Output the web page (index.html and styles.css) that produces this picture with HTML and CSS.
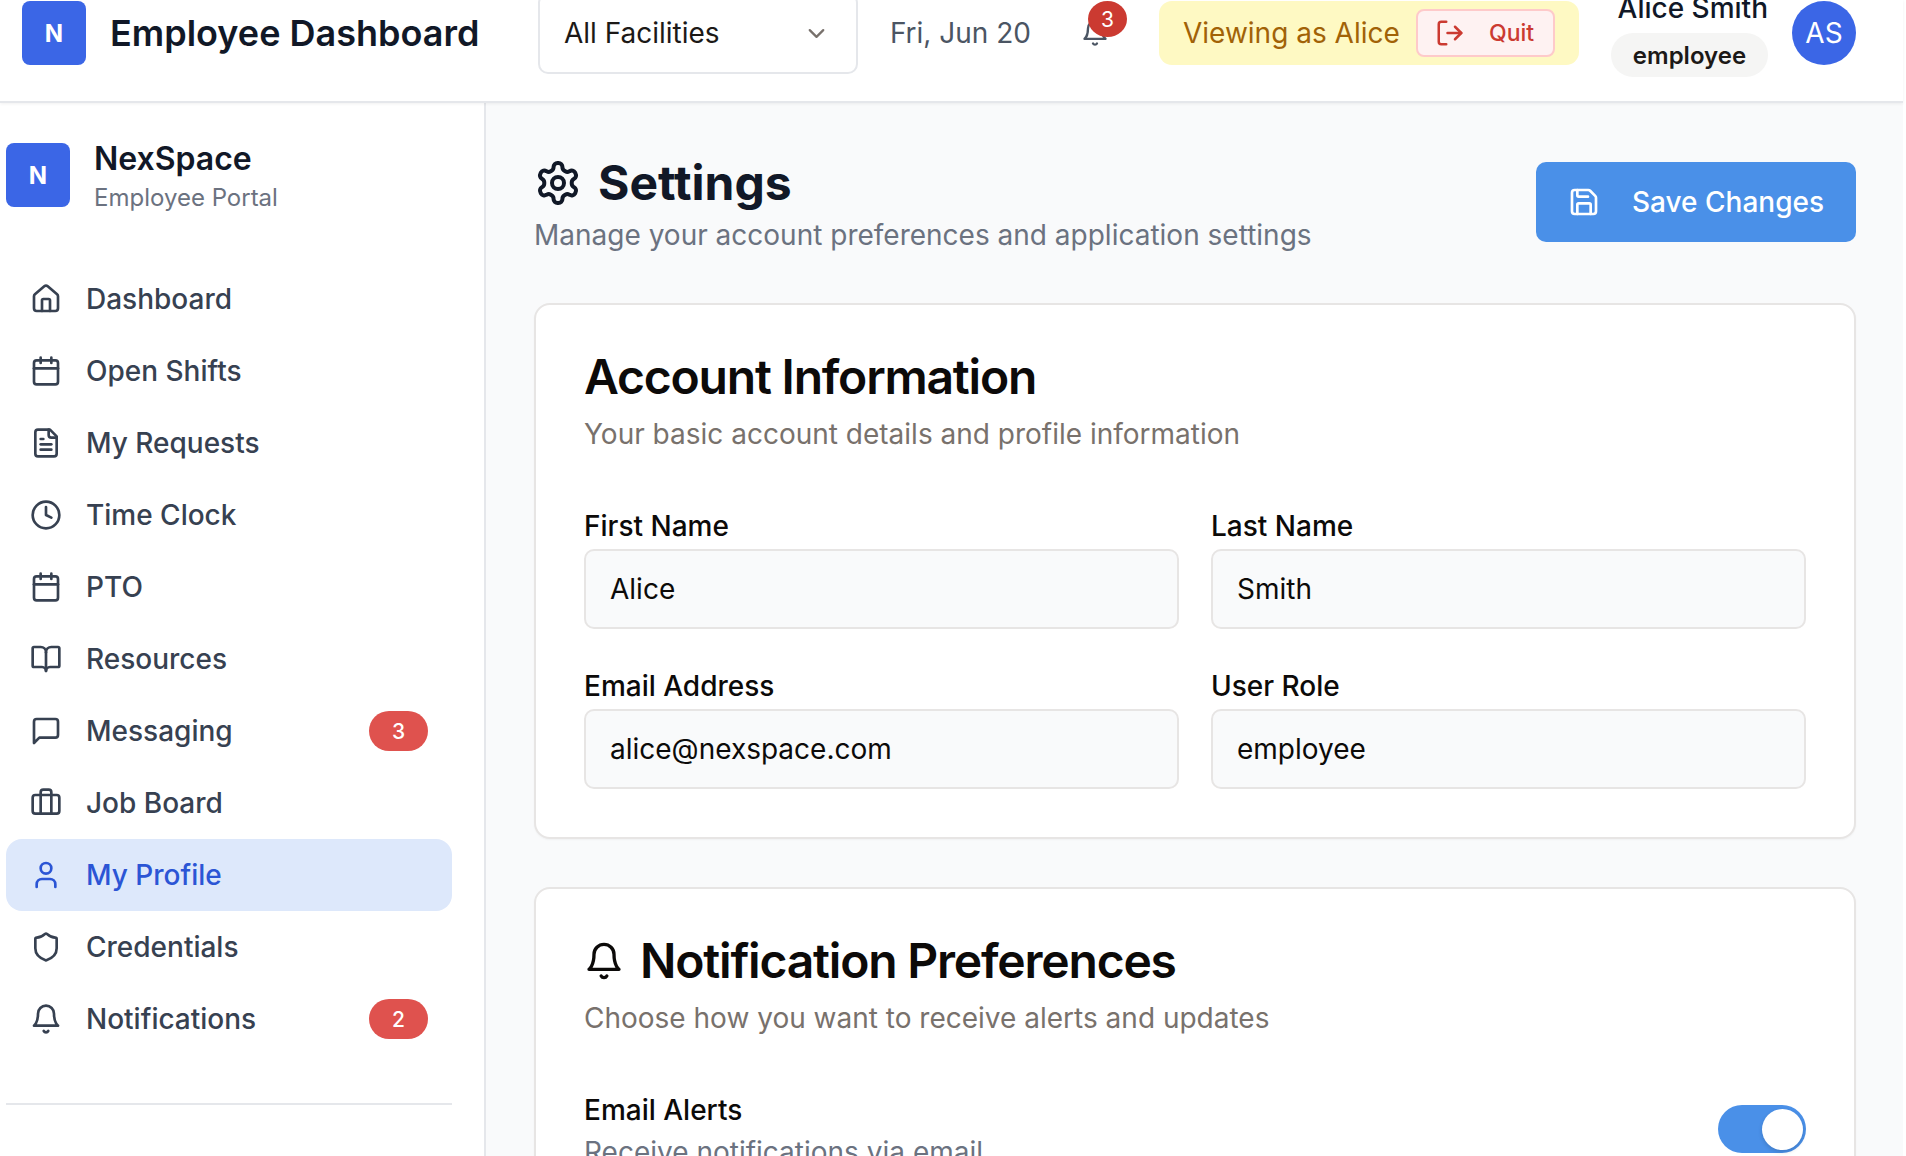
FILE: index.html
```html
<!DOCTYPE html>
<html lang="en">
<head>
    <meta charset="UTF-8">
    <title>Employee Dashboard</title>
    <link rel="stylesheet" href="styles.css">
</head>
<body>
<div class="page">
    <header class="topbar">
        <div class="brand">
            <div class="logo">N</div>
            <div class="brand-title">Employee Dashboard</div>
        </div>
        <div class="facility">
            <span>All Facilities</span>
            <svg class="chev" viewBox="0 0 24 24"><path d="m6 9 6 6 6-6"/></svg>
        </div>
        <div class="date">Fri, Jun 20</div>
        <div class="bell">
            <svg class="bell-icon" viewBox="0 0 24 24"><path d="M6 8a6 6 0 0 1 12 0c0 7 3 9 3 9H3s3-2 3-9"/><path d="M10.3 21a1.94 1.94 0 0 0 3.4 0"/></svg>
            <span class="bell-count">3</span>
        </div>
        <div class="viewing">
            <span>Viewing as Alice</span>
            <div class="quit">
                <svg viewBox="0 0 24 24"><path d="M9 3H5a2 2 0 0 0-2 2v14a2 2 0 0 0 2 2h4"/><path d="M10 12h11"/><path d="m16 7 5 5-5 5"/></svg>
                <span>Quit</span>
            </div>
        </div>
        <div class="user">
            <div class="user-name">Alice Smith</div>
            <div class="user-role">employee</div>
        </div>
        <div class="avatar">AS</div>
    </header>

    <div class="body-row">
        <aside class="sidebar">
            <div class="side-brand">
                <div class="logo">N</div>
                <div class="side-text">
                    <div class="side-name">NexSpace</div>
                    <div class="side-sub">Employee Portal</div>
                </div>
            </div>
            <nav class="nav">
                <a class="nav-item"><svg viewBox="0 0 24 24"><path d="M15 21v-8a1 1 0 0 0-1-1h-4a1 1 0 0 0-1 1v8"/><path d="M3 10a2 2 0 0 1 .7-1.5l7-6a2 2 0 0 1 2.6 0l7 6a2 2 0 0 1 .7 1.5v9a2 2 0 0 1-2 2H5a2 2 0 0 1-2-2z"/></svg>Dashboard</a>
                <a class="nav-item"><svg viewBox="0 0 24 24"><path d="M8 2v4"/><path d="M16 2v4"/><rect x="3" y="4" width="18" height="18" rx="2"/><path d="M3 10h18"/></svg>Open Shifts</a>
                <a class="nav-item"><svg viewBox="0 0 24 24"><path d="M15 2H6a2 2 0 0 0-2 2v16a2 2 0 0 0 2 2h12a2 2 0 0 0 2-2V7z"/><path d="M14 2v4a2 2 0 0 0 2 2h4"/><path d="M10 9H8"/><path d="M16 13H8"/><path d="M16 17H8"/></svg>My Requests</a>
                <a class="nav-item"><svg viewBox="0 0 24 24"><circle cx="12" cy="12" r="10"/><path d="M12 6v6l4 2"/></svg>Time Clock</a>
                <a class="nav-item"><svg viewBox="0 0 24 24"><path d="M8 2v4"/><path d="M16 2v4"/><rect x="3" y="4" width="18" height="18" rx="2"/><path d="M3 10h18"/></svg>PTO</a>
                <a class="nav-item"><svg viewBox="0 0 24 24"><path d="M12 7v14"/><path d="M3 18a1 1 0 0 1-1-1V4a1 1 0 0 1 1-1h5a4 4 0 0 1 4 4 4 4 0 0 1 4-4h5a1 1 0 0 1 1 1v13a1 1 0 0 1-1 1h-6a3 3 0 0 0-3 3 3 3 0 0 0-3-3z"/></svg>Resources</a>
                <a class="nav-item"><svg viewBox="0 0 24 24"><path d="M21 15a2 2 0 0 1-2 2H7l-4 4V5a2 2 0 0 1 2-2h14a2 2 0 0 1 2 2z"/></svg>Messaging<span class="nav-badge">3</span></a>
                <a class="nav-item"><svg viewBox="0 0 24 24"><path d="M16 20V4a2 2 0 0 0-2-2h-4a2 2 0 0 0-2 2v16"/><rect x="2" y="6" width="20" height="14" rx="2"/></svg>Job Board</a>
                <a class="nav-item active"><svg viewBox="0 0 24 24"><path d="M19 21v-2a4 4 0 0 0-4-4H9a4 4 0 0 0-4 4v2"/><circle cx="12" cy="7" r="4"/></svg>My Profile</a>
                <a class="nav-item"><svg viewBox="0 0 24 24"><path d="M20 13c0 5-3.5 7.5-7.66 8.95a1 1 0 0 1-.67-.01C7.5 20.5 4 18 4 13V6a1 1 0 0 1 1-1c2 0 4.500-1.200 6.240-2.720a1.170 1.170 0 0 1 1.520 0C14.510 3.810 17 5 19 5a1 1 0 0 1 1 1z"/></svg>Credentials</a>
                <a class="nav-item"><svg viewBox="0 0 24 24"><path d="M6 8a6 6 0 0 1 12 0c0 7 3 9 3 9H3s3-2 3-9"/><path d="M10.3 21a1.94 1.94 0 0 0 3.4 0"/></svg>Notifications<span class="nav-badge">2</span></a>
            </nav>
            <div class="side-rule"></div>
        </aside>

        <main class="main">
            <div class="page-head">
                <div>
                    <h1 class="page-title">
                        <svg viewBox="0 0 24 24"><path d="M12.220 2h-.44a2 2 0 0 0-2 2v.18a2 2 0 0 1-1 1.730l-.43.25a2 2 0 0 1-2 0l-.15-.08a2 2 0 0 0-2.730.73l-.22.38a2 2 0 0 0 .73 2.730l.15.1a2 2 0 0 1 1 1.720v.51a2 2 0 0 1-1 1.740l-.15.09a2 2 0 0 0-.73 2.730l.22.38a2 2 0 0 0 2.730.73l.15-.08a2 2 0 0 1 2 0l.43.25a2 2 0 0 1 1 1.730V20a2 2 0 0 0 2 2h.44a2 2 0 0 0 2-2v-.18a2 2 0 0 1 1-1.730l.43-.25a2 2 0 0 1 2 0l.15.08a2 2 0 0 0 2.730-.73l.22-.39a2 2 0 0 0-.73-2.730l-.15-.08a2 2 0 0 1-1-1.740v-.5a2 2 0 0 1 1-1.740l.15-.09a2 2 0 0 0 .73-2.730l-.22-.38a2 2 0 0 0-2.730-.73l-.15.08a2 2 0 0 1-2 0l-.43-.25a2 2 0 0 1-1-1.730V4a2 2 0 0 0-2-2z"/><circle cx="12" cy="12" r="3"/></svg>
                        Settings
                    </h1>
                    <p class="page-sub">Manage your account preferences and application settings</p>
                </div>
                <button class="save">
                    <svg viewBox="0 0 24 24"><path d="M15.200 3a2 2 0 0 1 1.400.6l3.800 3.800a2 2 0 0 1 .6 1.400V19a2 2 0 0 1-2 2H5a2 2 0 0 1-2-2V5a2 2 0 0 1 2-2z"/><path d="M17 21v-7a1 1 0 0 0-1-1H8a1 1 0 0 0-1 1v7"/><path d="M7 3v4a1 1 0 0 0 1 1h7"/></svg>
                    Save Changes
                </button>
            </div>

            <section class="card">
                <h2 class="card-title">Account Information</h2>
                <p class="card-sub">Your basic account details and profile information</p>
                <div class="fields">
                    <div class="field">
                        <label>First Name</label>
                        <div class="input">Alice</div>
                    </div>
                    <div class="field">
                        <label>Last Name</label>
                        <div class="input">Smith</div>
                    </div>
                    <div class="field">
                        <label>Email Address</label>
                        <div class="input">alice@nexspace.com</div>
                    </div>
                    <div class="field">
                        <label>User Role</label>
                        <div class="input">employee</div>
                    </div>
                </div>
            </section>

            <section class="card">
                <h2 class="card-title">
                    <svg viewBox="0 0 24 24"><path d="M6 8a6 6 0 0 1 12 0c0 7 3 9 3 9H3s3-2 3-9"/><path d="M10.3 21a1.94 1.94 0 0 0 3.4 0"/></svg>
                    Notification Preferences
                </h2>
                <p class="card-sub">Choose how you want to receive alerts and updates</p>
                <div class="pref">
                    <div>
                        <div class="pref-name">Email Alerts</div>
                        <div class="pref-sub">Receive notifications via email</div>
                    </div>
                    <div class="toggle"><span class="thumb"></span></div>
                </div>
            </section>
        </main>
    </div>
</div>
</body>
</html>
```

FILE: styles.css
```css
* {
    box-sizing: border-box;
}
html, body {
    margin: 0;
    height: 100%;
    overflow: hidden;
    background: #fff;
}
body {
    font-family: Inter, "Liberation Sans", sans-serif;
    color: #111827;
}
svg {
    fill: none;
    stroke: currentColor;
    stroke-width: 2;
    stroke-linecap: round;
    stroke-linejoin: round;
    flex-shrink: 0;
}
.page {
    width: 1903px;
    height: 1156px;
    display: flex;
    flex-direction: column;
}

/* top bar */
.topbar {
    height: 103px;
    flex-shrink: 0;
    display: flex;
    align-items: center;
    gap: 32px;
    padding: 0 47px 35px 22px;
    background: #fff;
    border-bottom: 2px solid #e5e7eb;
    box-shadow: 0 1px 3px rgba(0, 0, 0, 0.06);
    position: relative;
    z-index: 2;
}
.brand {
    display: flex;
    align-items: center;
    gap: 24px;
    width: 484px;
}
.logo {
    width: 64px;
    height: 64px;
    border-radius: 8px;
    background: #3b66e6;
    color: #fff;
    font-size: 24px;
    font-weight: 700;
    display: flex;
    align-items: center;
    justify-content: center;
    flex-shrink: 0;
}
.brand-title {
    font-size: 36px;
    font-weight: 600;
    white-space: nowrap;
}
.facility {
    width: 320px;
    height: 81px;
    flex-shrink: 0;
    border: 2px solid #e5e7eb;
    border-radius: 10px;
    display: flex;
    align-items: center;
    justify-content: space-between;
    padding: 0 26px 0 24px;
    font-size: 28px;
    color: #1c1917;
}
.chev {
    width: 27px;
    height: 27px;
    color: #78716c;
}
.date {
    font-size: 28px;
    color: #4b5563;
    white-space: nowrap;
}
.bell {
    width: 64px;
    height: 64px;
    flex-shrink: 0;
    display: flex;
    align-items: center;
    justify-content: center;
    position: relative;
    color: #4b5563;
}
.bell-icon {
    width: 28px;
    height: 28px;
}
.bell-count {
    position: absolute;
    top: 0;
    right: 0;
    width: 39px;
    height: 36px;
    border-radius: 50%;
    background: #cb3a31;
    color: #fff;
    font-size: 21px;
    display: flex;
    align-items: center;
    justify-content: center;
}
.viewing {
    width: 420px;
    height: 64px;
    flex-shrink: 0;
    border-radius: 13px;
    background: #fef9c3;
    color: #a16207;
    font-size: 28px;
    display: flex;
    align-items: center;
    justify-content: space-between;
    padding: 0 24px;
}
.quit {
    width: 139px;
    height: 48px;
    background: #fef2f2;
    border: 2px solid #fecaca;
    border-radius: 8px;
    color: #cb3a31;
    font-size: 23px;
    font-weight: 500;
    display: flex;
    align-items: center;
    gap: 24px;
    padding-left: 17px;
}
.quit svg {
    width: 30px;
    height: 30px;
}
.user {
    width: 157px;
    flex-shrink: 0;
    margin-top: 3px;
    display: flex;
    flex-direction: column;
    align-items: flex-end;
    gap: 9px;
}
.user-name {
    font-size: 28px;
    font-weight: 500;
    line-height: 32px;
    white-space: nowrap;
}
.user-role {
    width: 100%;
    height: 44px;
    border-radius: 22px;
    background: #f5f5f4;
    color: #1c1917;
    font-size: 24px;
    font-weight: 600;
    display: flex;
    align-items: center;
    justify-content: center;
}
.avatar {
    width: 64px;
    height: 64px;
    margin-left: -8px;
    flex-shrink: 0;
    border-radius: 50%;
    background: #3b66e6;
    color: #fff;
    font-size: 28px;
    display: flex;
    align-items: center;
    justify-content: center;
}

.body-row {
    flex: 1;
    display: flex;
    min-height: 0;
}

/* sidebar */
.sidebar {
    width: 486px;
    flex-shrink: 0;
    background: #fff;
    border-right: 2px solid #e5e7eb;
    padding: 40px 32px 0 6px;
}
.side-brand {
    display: flex;
    align-items: center;
    gap: 24px;
    height: 64px;
    margin-bottom: 56px;
}
.side-text {
    padding-top: 4px;
}
.side-name {
    font-size: 32px;
    font-weight: 600;
    line-height: 38px;
}
.side-sub {
    font-size: 24px;
    color: #6b7280;
    line-height: 32px;
    margin-top: 4px;
}
.nav-item {
    height: 72px;
    display: flex;
    align-items: center;
    gap: 24px;
    padding: 0 24px;
    border-radius: 16px;
    font-size: 28px;
    font-weight: 500;
    color: #374151;
}
.nav-item svg {
    width: 32px;
    height: 32px;
}
.nav-item.active {
    background: #dde8fb;
    color: #2b55d5;
}
.nav-badge {
    margin-left: auto;
    width: 59px;
    height: 40px;
    border-radius: 20px;
    background: #df524e;
    color: #fff;
    font-size: 21px;
    font-weight: 500;
    display: flex;
    align-items: center;
    justify-content: center;
}
.side-rule {
    height: 2px;
    background: #e5e7eb;
    margin-top: 48px;
}

/* main */
.main {
    flex: 1;
    min-width: 0;
    background: #f9fafb;
    padding: 48px 47px 0 48px;
    overflow: hidden;
}
.page-head {
    display: flex;
    justify-content: space-between;
    align-items: center;
    margin-bottom: 50px;
}
.page-title {
    display: flex;
    align-items: center;
    gap: 16px;
    margin: 0;
    font-size: 48px;
    font-weight: 700;
    line-height: 64px;
}
.page-title svg {
    width: 48px;
    height: 48px;
}
.page-sub {
    margin: 2px 0 0;
    font-size: 28px;
    line-height: 36px;
    color: #6b7280;
}
.save {
    width: 320px;
    height: 80px;
    border: 0;
    border-radius: 10px;
    background: #4a90e8;
    color: #fff;
    font: 500 28px Inter, "Liberation Sans", sans-serif;
    display: flex;
    align-items: center;
    gap: 32px;
    padding-left: 32px;
}
.save svg {
    width: 32px;
    height: 32px;
}
.card {
    background: #fff;
    border: 2px solid #e7e5e4;
    border-radius: 16px;
    padding: 47px 48px 48px;
    margin-bottom: 48px;
    box-shadow: 0 1px 2px rgba(0, 0, 0, 0.04);
}
.card-title {
    display: flex;
    align-items: center;
    gap: 16px;
    margin: 0;
    font-size: 48px;
    font-weight: 600;
    line-height: 50px;
    letter-spacing: -1.2px;
    color: #0c0a09;
}
.card-title svg {
    width: 40px;
    height: 40px;
}
.card-sub {
    margin: 14px 0 0;
    font-size: 28px;
    line-height: 36px;
    color: #78716c;
}
.fields {
    display: grid;
    grid-template-columns: 1fr 1fr;
    gap: 41px 32px;
    margin-top: 58px;
}
.field label {
    display: block;
    font-size: 28px;
    font-weight: 500;
    line-height: 32px;
    color: #0c0a09;
    margin-bottom: 7px;
}
.input {
    height: 80px;
    border: 2px solid #e7e5e4;
    border-radius: 10px;
    background: #f9fafb;
    padding: 0 24px;
    display: flex;
    align-items: center;
    font-size: 28px;
    color: #0c0a09;
}
.pref {
    display: flex;
    justify-content: space-between;
    align-items: flex-start;
    margin-top: 58px;
}
.pref-name {
    font-size: 28px;
    font-weight: 500;
    line-height: 32px;
    color: #0c0a09;
}
.pref-sub {
    font-size: 28px;
    line-height: 36px;
    margin-top: 8px;
    color: #6b7280;
}
.toggle {
    width: 88px;
    height: 48px;
    margin-top: 11px;
    border-radius: 24px;
    background: #4a90e8;
    display: flex;
    align-items: center;
    justify-content: flex-end;
    padding-right: 3px;
}
.thumb {
    width: 41px;
    height: 41px;
    border-radius: 50%;
    background: #fff;
    box-shadow: 0 2px 4px rgba(0, 0, 0, 0.15);
}
```
